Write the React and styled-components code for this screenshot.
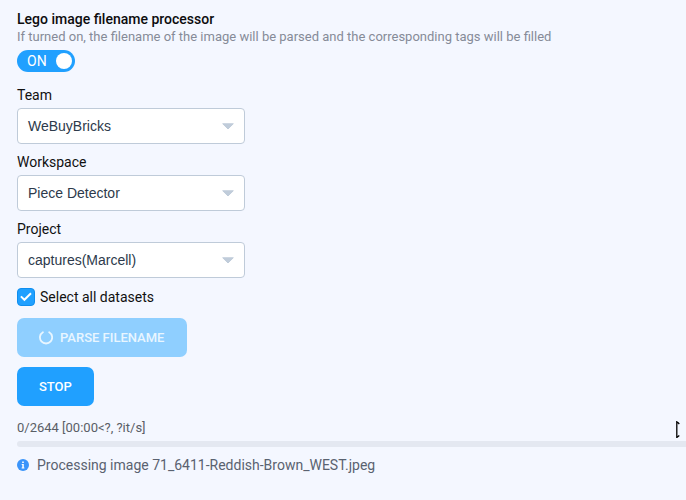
import React from "react";
import styled, { createGlobalStyle } from "styled-components";

const GlobalStyle = createGlobalStyle`
  * { box-sizing: border-box; }
  body {
    margin: 0;
    background: #f4f7ff;
    color: #111;
    font-family: Roboto, "Liberation Sans", sans-serif;
    font-size: 14px;
    overflow: hidden;
  }
`;

const Panel = styled.main`
  position: relative;
  display: flex;
  flex-direction: column;
  align-items: flex-start;
  height: 500px;
  padding: 10px 0 0 17px;
`;

const Title = styled.h1`
  margin: 0;
  font-size: 14px;
  line-height: 18px;
  font-weight: 500;
  color: #0c0c0e;
`;

const Description = styled.p`
  margin: 0;
  font-size: 13px;
  line-height: 18px;
  color: #868b98;
  white-space: nowrap;
`;

const Switch = styled.button`
  display: flex;
  align-items: center;
  justify-content: space-between;
  width: 58px;
  height: 22px;
  margin: 4px 0 13px;
  padding: 0 3px 0 10px;
  border: 0;
  border-radius: 11px;
  background: #20a0ff;
  color: #fff;
  font: 14px/22px Roboto, sans-serif;
`;

const Knob = styled.span`
  width: 16px;
  height: 16px;
  border-radius: 50%;
  background: #fff;
`;

const Field = styled.div`
  display: flex;
  flex-direction: column;
  height: 67px;
`;

const Label = styled.label`
  height: 23px;
  line-height: 20px;
`;

const SelectBox = styled.div`
  display: flex;
  align-items: center;
  justify-content: space-between;
  width: 228px;
  height: 36px;
  padding: 0 10px;
  border: 1px solid #bfcbd9;
  border-radius: 4px;
  background: #fff;
  color: #2d3a4b;
  font-family: "Liberation Sans", Arial, sans-serif;
`;

const CheckRow = styled.div`
  display: flex;
  align-items: center;
  gap: 5px;
  height: 18px;
  margin: 2px 0 12px;
`;

const CheckBox = styled.span`
  display: flex;
  width: 18px;
  height: 18px;
  border: 1px solid #0f8eef;
  border-radius: 4px;
  background: #20a0ff;
`;

const Button = styled.button`
  display: flex;
  align-items: center;
  gap: 7px;
  width: ${(p) => p.$width}px;
  height: 39px;
  margin: 0 0 10px;
  padding: 0 0 0 ${(p) => (p.$busy ? 21 : 22)}px;
  border: 0;
  border-radius: 7px;
  background: ${(p) => (p.$busy ? "#8fcfff" : "#20a0ff")};
  color: ${(p) => (p.$busy ? "#e9f6ff" : "#fff")};
  font: 500 13px/39px Roboto, sans-serif;
  white-space: nowrap;
`;

const ProgressText = styled.div`
  height: 20px;
  margin-top: 2px;
  line-height: 20px;
  font-size: 13px;
  color: #5a5e66;
`;

const Track = styled.div`
  align-self: stretch;
  height: 6px;
  margin-top: 3px;
  border-radius: 3px 0 0 3px;
  background: #e4e8f1;
`;

const Status = styled.div`
  display: flex;
  align-items: center;
  gap: 8px;
  height: 20px;
  margin-top: 8px;
  color: #5a6270;
`;

const Pointer = styled.svg`
  position: absolute;
  left: 675px;
  top: 420px;
`;

function Select({ label, value }) {
  return (
    <Field>
      <Label>{label}</Label>
      <SelectBox>
        {value}
        <svg width="12" height="7" viewBox="0 0 12 7">
          <path d="M.7 .8h10.6L6 6z" fill="#c0ccda" stroke="#c0ccda" strokeLinejoin="round" />
        </svg>
      </SelectBox>
    </Field>
  );
}

export default function App() {
  return (
    <>
      <GlobalStyle />
      <Panel>
        <Title>Lego image filename processor</Title>
        <Description>
          If turned on, the filename of the image will be parsed and the corresponding tags will be filled
        </Description>
        <Switch>ON<Knob /></Switch>
        <Select label="Team" value="WeBuyBricks" />
        <Select label="Workspace" value="Piece Detector" />
        <Select label="Project" value="captures(Marcell)" />
        <CheckRow>
          <CheckBox>
            <svg width="16" height="16" viewBox="0 0 16 16" fill="none">
              <path d="M2.9 7.4l3.5 3.4 6.6-6.5" stroke="#fff" strokeWidth="2" />
            </svg>
          </CheckBox>
          <span>Select all datasets</span>
        </CheckRow>
        <Button $width={170} $busy>
          <svg width="15" height="15" viewBox="0 0 15 15" fill="none">
            <path d="M11.2 2.2A6.1 6.1 0 1 1 4.9 2.2" stroke="#e9f6ff" strokeWidth="1.8" strokeLinecap="round" />
          </svg>
          PARSE FILENAME
        </Button>
        <Button $width={77}>STOP</Button>
        <ProgressText>0/2644 [00:00&lt;?, ?it/s]</ProgressText>
        <Track />
        <Status>
          <svg width="12" height="12" viewBox="0 0 12 12">
            <circle cx="6" cy="6" r="6" fill="#3a94fa" />
            <path d="M5.2 2.5h1.6v1.5H5.2zM4.7 5h2.1v3.5h.6v1H4.6v-1h.7V6h-.6z" fill="#fff" />
          </svg>
          <span>Processing image 71_6411-Reddish-Brown_WEST.jpeg</span>
        </Status>
        <Pointer width="6" height="19" viewBox="0 0 6 19" fill="none">
          <path d="M1.8 1v17M1.8 1.5l2.5 2.5M1.8 17.5L4.3 15.5" stroke="#000" strokeWidth="1.3" />
        </Pointer>
      </Panel>
    </>
  );
}
